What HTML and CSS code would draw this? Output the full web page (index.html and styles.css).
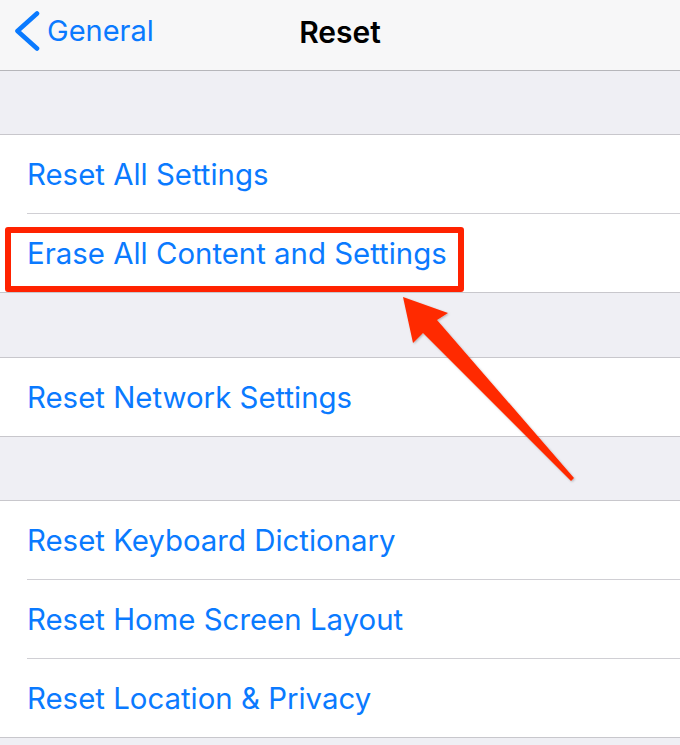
FILE: index.html
```html
<!DOCTYPE html>
<html>
<head>
<meta charset="utf-8">
<link rel="stylesheet" href="styles.css">
</head>
<body>
<div class="screen">
  <header class="nav">
    <div class="back">
      <svg class="chev" width="26" height="44" viewBox="0 0 26 44"><polyline points="22,2.5 2.5,20 22,37.5" fill="none" stroke="#0a7aff" stroke-width="4.6" stroke-linecap="round" stroke-linejoin="round"/></svg>
      <span class="back-label">General</span>
    </div>
    <div class="title">Reset</div>
  </header>
  <div class="spacer"></div>
  <div class="group">
    <div class="row"><span>Reset All Settings</span></div>
    <div class="row last"><span>Erase All Content and Settings</span></div>
  </div>
  <div class="spacer tall"></div>
  <div class="group">
    <div class="row last"><span>Reset Network Settings</span></div>
  </div>
  <div class="spacer"></div>
  <div class="group">
    <div class="row"><span>Reset Keyboard Dictionary</span></div>
    <div class="row"><span>Reset Home Screen Layout</span></div>
    <div class="row last"><span>Reset Location &amp; Privacy</span></div>
  </div>
  <div class="highlight"></div>
  <svg class="arrow" width="680" height="745" viewBox="0 0 680 745">
    <defs>
      <filter id="sh" x="-20%" y="-20%" width="140%" height="140%">
        <feDropShadow dx="1" dy="1" stdDeviation="1" flood-color="#000" flood-opacity="0.25"/>
      </filter>
    </defs>
    <polygon filter="url(#sh)" fill="#ff2a00" points="403,297 448,313 437,320 574,478 571,481 423,333 413,343"/>
  </svg>
</div>
</body>
</html>
```

FILE: styles.css
```css
* { box-sizing: border-box; }
html, body { margin: 0; padding: 0; }
body {
  width: 680px;
  height: 745px;
  overflow: hidden;
  background: #efeff4;
  font-family: "Inter", "Roboto", "Liberation Sans", sans-serif;
}
.screen {
  position: relative;
  width: 680px;
  height: 745px;
  background: #efeff4;
}
.nav {
  height: 71px;
  background: #f7f7f8;
  border-bottom: 1px solid #b6b6ba;
  display: flex;
  align-items: flex-start;
  position: relative;
}
.back {
  display: flex;
  align-items: center;
  padding-left: 15px;
  padding-top: 11px;
  gap: 6px;
}
.chev { display: block; }
.back-label {
  color: #0a7aff;
  font-size: 29px;
  line-height: 40px;
  margin-top: -5px;
}
.title {
  position: absolute;
  left: 0;
  right: 0;
  top: 12px;
  text-align: center;
  font-size: 30px;
  font-weight: 600;
  color: #000;
  line-height: 40px;
}
.spacer { height: 63px; }
.spacer.tall { height: 64px; }
.group {
  background: #fff;
  border-top: 1px solid #c8c7cc;
}
.row {
  height: 79px;
  padding-left: 27px;
  display: flex;
  align-items: center;
  position: relative;
  color: #0a7aff;
  font-size: 29.4px;
}
.row::after {
  content: "";
  position: absolute;
  left: 27px;
  right: 0;
  bottom: 0;
  height: 1px;
  background: #d0cfd4;
}
.row.last::after { left: 0; background: #c8c7cc; }
.highlight {
  position: absolute;
  left: 5px;
  top: 227px;
  width: 459px;
  height: 65px;
  border: 6px solid #ff2200;
  border-radius: 3px;
}
.arrow {
  position: absolute;
  left: 0;
  top: 0;
  pointer-events: none;
}
```
